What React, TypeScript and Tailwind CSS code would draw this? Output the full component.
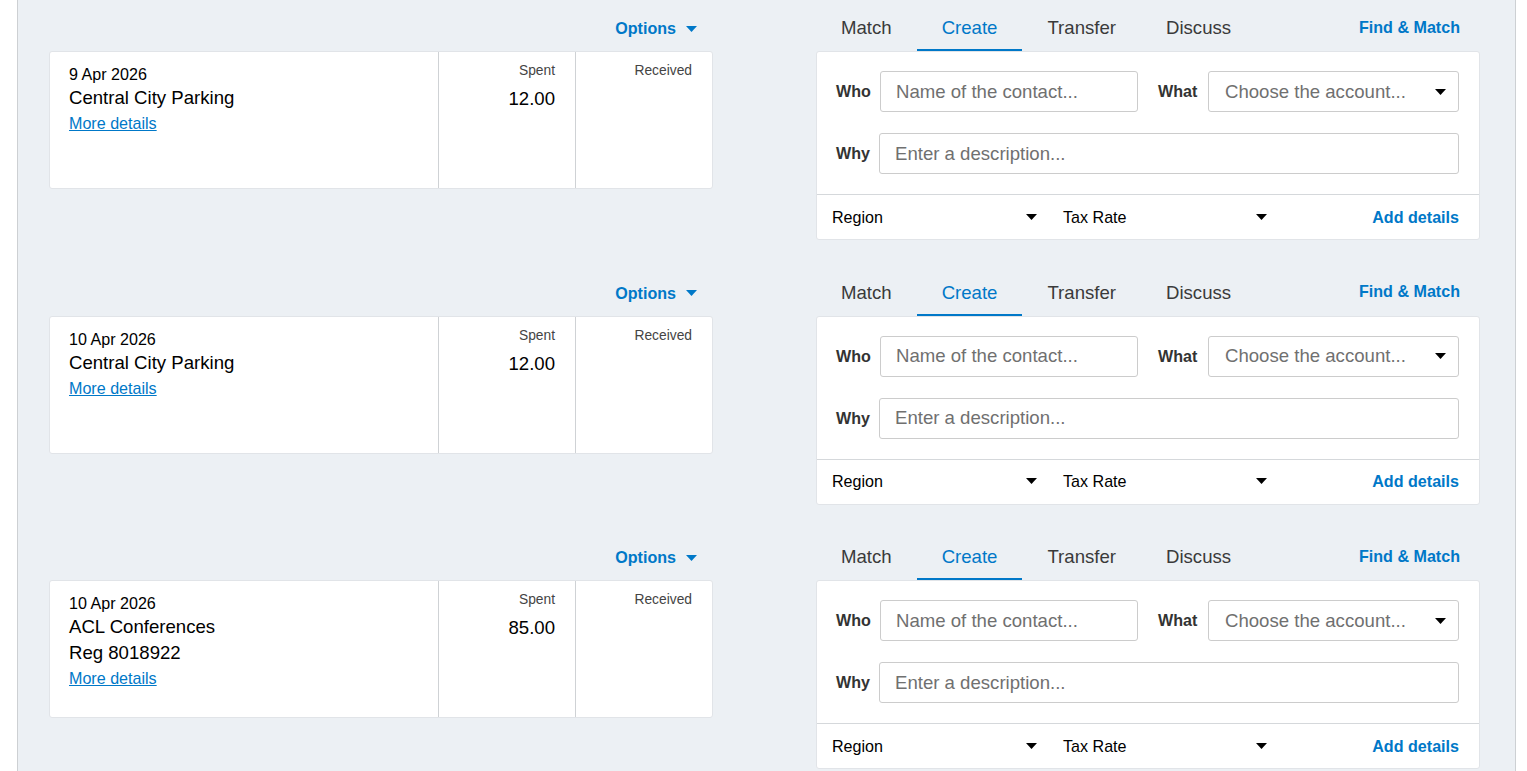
import React from "react";

const BLUE = "text-[#0078c8]";

function Caret({ className = "" }: { className?: string }) {
  return (
    <svg width="11" height="6" viewBox="0 0 11 6" className={className}>
      <path d="M0 0 L11 0 L5.5 6 Z" fill="currentColor" />
    </svg>
  );
}

type Tx = { date: string; lines: string[]; spent: string };

const txs: Tx[] = [
  { date: "9 Apr 2026", lines: ["Central City Parking"], spent: "12.00" },
  { date: "10 Apr 2026", lines: ["Central City Parking"], spent: "12.00" },
  { date: "10 Apr 2026", lines: ["ACL Conferences", "Reg 8018922"], spent: "85.00" },
];

function LeftSide({ tx }: { tx: Tx }) {
  return (
    <div className="w-[664px] flex flex-col">
      <div className="h-[51px] flex items-center justify-end pr-[16px] pt-[6px]">
        <span className={`${BLUE} font-bold text-[16.1px]`}>Options</span>
        <Caret className={`${BLUE} ml-[10px]`} />
      </div>
      <div className="bg-white border border-[#e1e4e8] rounded-[3px] min-h-[138px] flex text-black">
        <div className="w-[388px] pl-[19px] pt-[11px]">
          <div className="text-[16.1px] leading-[22px]">{tx.date}</div>
          {tx.lines.map((l, i) => (
            <div key={i} className="text-[18.6px] leading-[26px]">
              {l}
            </div>
          ))}
          <div className="text-[16.1px] leading-[24px]">
            <a className={`${BLUE} underline`} href="#">
              More details
            </a>
          </div>
        </div>
        <div className="w-[137px] border-l border-[#cfd2d5] pr-[20px] pt-[10px] text-right">
          <div className="text-[13.8px] leading-[18px] text-[#444]">Spent</div>
          <div className="text-[18.6px] leading-[26px] mt-[6px]">{tx.spent}</div>
        </div>
        <div className="flex-1 border-l border-[#cfd2d5] pr-[20px] pt-[10px] text-right">
          <div className="text-[13.8px] leading-[18px] text-[#444]">Received</div>
        </div>
      </div>
    </div>
  );
}

function RightSide() {
  const tabs = ["Match", "Create", "Transfer", "Discuss"];
  return (
    <div className="w-[664px] flex flex-col">
      <div className="h-[51px] flex items-stretch">
        {tabs.map((t) => (
          <div
            key={t}
            className={`px-[25px] pt-[7px] flex items-center text-[18.6px] border-b-2 ${
              t === "Create" ? "border-[#0078c8] text-[#0078c8]" : "border-transparent text-[#3a3a3a]"
            }`}
          >
            {t}
          </div>
        ))}
        <div className="flex-1" />
        <div className={`${BLUE} font-bold text-[16.1px] flex items-center pt-[3px] pr-[20px]`}>Find &amp; Match</div>
      </div>
      <div className="bg-white border border-[#e1e4e8] rounded-[3px]">
        <div className="pt-[19px] pb-[20px] pl-[19px] pr-[20px]">
          <div className="flex items-center">
            <div className="w-[44px] font-bold text-[16.1px] text-[#333]">Who</div>
            <div className="w-[258px] h-[41px] border border-[#cccccc] rounded-[3px] flex items-center pl-[15px] text-[18.6px] text-[#707070]">
              Name of the contact...
            </div>
            <div className="ml-[20px] w-[50px] font-bold text-[16.1px] text-[#333]">What</div>
            <div className="flex-1 h-[41px] border border-[#cccccc] rounded-[3px] flex items-center pl-[16px] pr-[12px] text-[18.6px] text-[#707070]">
              <span className="flex-1">Choose the account...</span>
              <Caret className="text-black" />
            </div>
          </div>
          <div className="flex items-center mt-[21px]">
            <div className="w-[43px] font-bold text-[16.1px] text-[#333]">Why</div>
            <div className="flex-1 h-[41px] border border-[#cccccc] rounded-[3px] flex items-center pl-[15px] text-[18.6px] text-[#707070]">
              Enter a description...
            </div>
          </div>
        </div>
        <div className="border-t border-[#d5d8db] h-[45px] flex items-center text-[16.1px] text-black">
          <div className="w-[230px] pl-[15px] pr-[10px] flex items-center">
            <span className="flex-1">Region</span>
            <Caret />
          </div>
          <div className="w-[230px] pl-[16px] pr-[10px] flex items-center">
            <span className="flex-1">Tax Rate</span>
            <Caret />
          </div>
          <div className="flex-1" />
          <div className={`${BLUE} font-bold pr-[20px]`}>Add details</div>
        </div>
      </div>
    </div>
  );
}

export default function App() {
  return (
    <div
      className="bg-white w-[1527px] h-[771px] overflow-hidden"
      style={{ fontFamily: '"Liberation Sans", Arial, sans-serif' }}
    >
      <div className="ml-[17px] mr-[11px] h-[771px] border-x border-[#cdd0d3] bg-[#ecf0f4] pl-[31px]">
        {txs.map((tx, i) => (
          <div key={i} className="flex gap-[103px] mb-[24.5px]">
            <div className="self-start">
              <LeftSide tx={tx} />
            </div>
            <RightSide />
          </div>
        ))}
      </div>
    </div>
  );
}
